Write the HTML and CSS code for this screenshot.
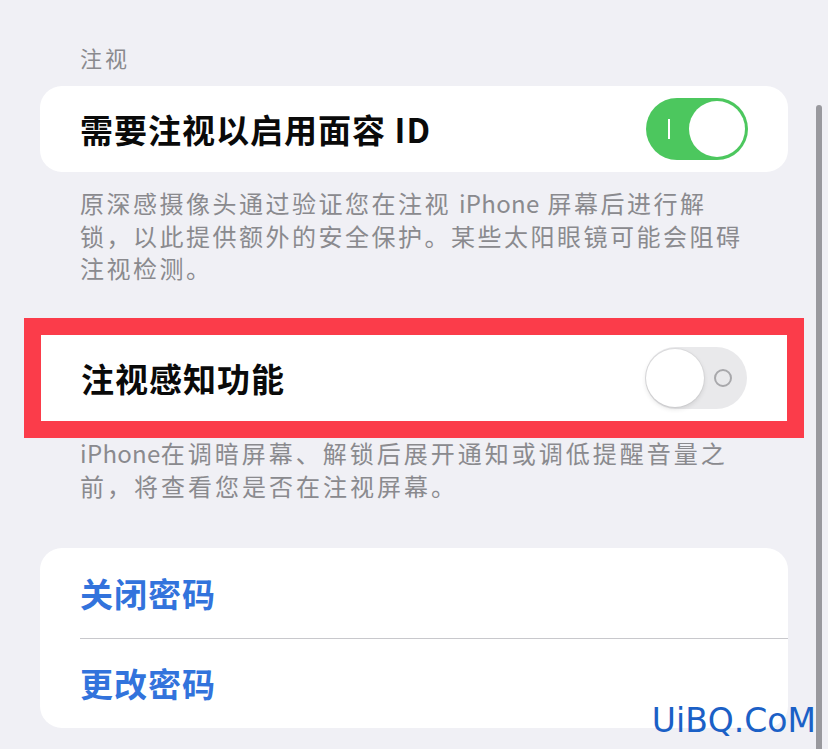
FILE: index.html
```html
<!DOCTYPE html>
<html lang="zh-CN">
<head>
    <meta charset="UTF-8">
    <meta name="viewport" content="width=device-width, initial-scale=1.0">
    <title>面容 ID 与密码</title>
    <link rel="stylesheet" href="styles.css">
</head>
<body>
    <div class="page">
        <h2 class="group-title">注视</h2>

        <div class="card">
            <div class="row">
                <span class="row-label">需要注视以启用面容 ID</span>
                <span class="switch on"><span class="mark-on"></span><span class="knob"></span></span>
            </div>
        </div>
        <p class="note">原深感摄像头通过验证您在注视 <span class="latin">iPhone</span> 屏幕后进行解<br>锁，以此提供额外的安全保护。某些太阳眼镜可能会阻碍<br>注视检测。</p>

        <!-- 红框标注 -->
        <div class="highlight">
            <div class="card flat">
                <div class="row">
                    <span class="row-label">注视感知功能</span>
                    <span class="switch off"><span class="knob"></span><span class="mark-off"></span></span>
                </div>
            </div>
        </div>
        <p class="note note-tight"><span class="latin">iPhone</span>在调暗屏幕、解锁后展开通知或调低提醒音量之<br>前，将查看您是否在注视屏幕。</p>

        <div class="card links">
            <div class="row link-row"><span class="link">关闭密码</span></div>
            <div class="row link-row"><span class="link">更改密码</span></div>
        </div>
    </div>

    <div class="scroll-bar"></div>
    <div class="watermark">UiBQ.CoM</div>
</body>
</html>
```

FILE: styles.css
```css
* {
    box-sizing: border-box;
    margin: 0;
    padding: 0;
}

body {
    background-color: #f0f0f5;
    color: #000;
    font-family: "Noto Sans CJK SC", "Noto Sans", sans-serif;
    width: 828px;
    height: 749px;
    overflow: hidden;
    position: relative;
}

.page {
    padding: 43px 40px 0 40px;
}

.group-title {
    font-size: 22px;
    font-weight: normal;
    letter-spacing: 3px;
    line-height: 28px;
    color: #8a8a8e;
    padding-left: 40px;
    margin-bottom: 15px;
}

.card {
    background-color: #fff;
    border-radius: 22px;
}

.card.flat {
    border-radius: 0;
}

.row {
    height: 86px;
    display: flex;
    align-items: center;
    justify-content: space-between;
    padding: 0 40px;
}

.row-label {
    font-size: 33px;
    font-weight: bold;
    letter-spacing: 1px;
    color: #0a0a0a;
}

.switch {
    position: relative;
    width: 102px;
    height: 62px;
    border-radius: 31px;
    flex-shrink: 0;
}

.switch.on {
    background-color: #4cc75e;
}

.switch.off {
    background-color: #e9e9eb;
}

.knob {
    position: absolute;
    top: 3px;
    width: 56px;
    height: 56px;
    border-radius: 50%;
    background-color: #fff;
}

.on .knob {
    right: 3px;
}

.off .knob {
    left: 1px;
    top: 2px;
    width: 58px;
    height: 58px;
    box-shadow: 0 2px 5px rgba(0, 0, 0, 0.12), 0 0 0 1px rgba(0, 0, 0, 0.04);
}

.mark-on {
    position: absolute;
    left: 22px;
    top: 21px;
    width: 2px;
    height: 20px;
    background-color: #fff;
}

.mark-off {
    position: absolute;
    left: 69px;
    top: 22px;
    width: 18px;
    height: 18px;
    border: 2px solid #a8a8ab;
    border-radius: 50%;
}

.note {
    font-size: 24px;
    letter-spacing: 2.5px;
    line-height: 32.5px;
    color: #8a8a8e;
    padding-left: 40px;
    margin-top: 15px;
}

.latin {
    letter-spacing: 0.3px;
}

.highlight {
    margin: 33px -16px 0 -16px;
    border: 17px solid #fb3c4a;
}

.note-tight {
    margin-top: -2px;
    line-height: 33px;
    letter-spacing: 3px;
}

.links {
    margin-top: 46px;
}

.link-row {
    height: 90px;
}

.link-row + .link-row {
    border-top: 1px solid #c8c8cc;
    margin-left: 40px;
    padding-left: 0;
}

.link {
    font-size: 33px;
    font-weight: bold;
    color: #3273dc;
    letter-spacing: 1px;
}

.scroll-bar {
    position: absolute;
    left: 816px;
    top: 105px;
    width: 6px;
    height: 660px;
    border-radius: 3px;
    background-color: #99999e;
}

.watermark {
    position: absolute;
    right: 12px;
    bottom: 8px;
    font-family: "DejaVu Sans", Verdana, sans-serif;
    font-size: 33px;
    color: #1b60c6;
    line-height: 40px;
}
```
